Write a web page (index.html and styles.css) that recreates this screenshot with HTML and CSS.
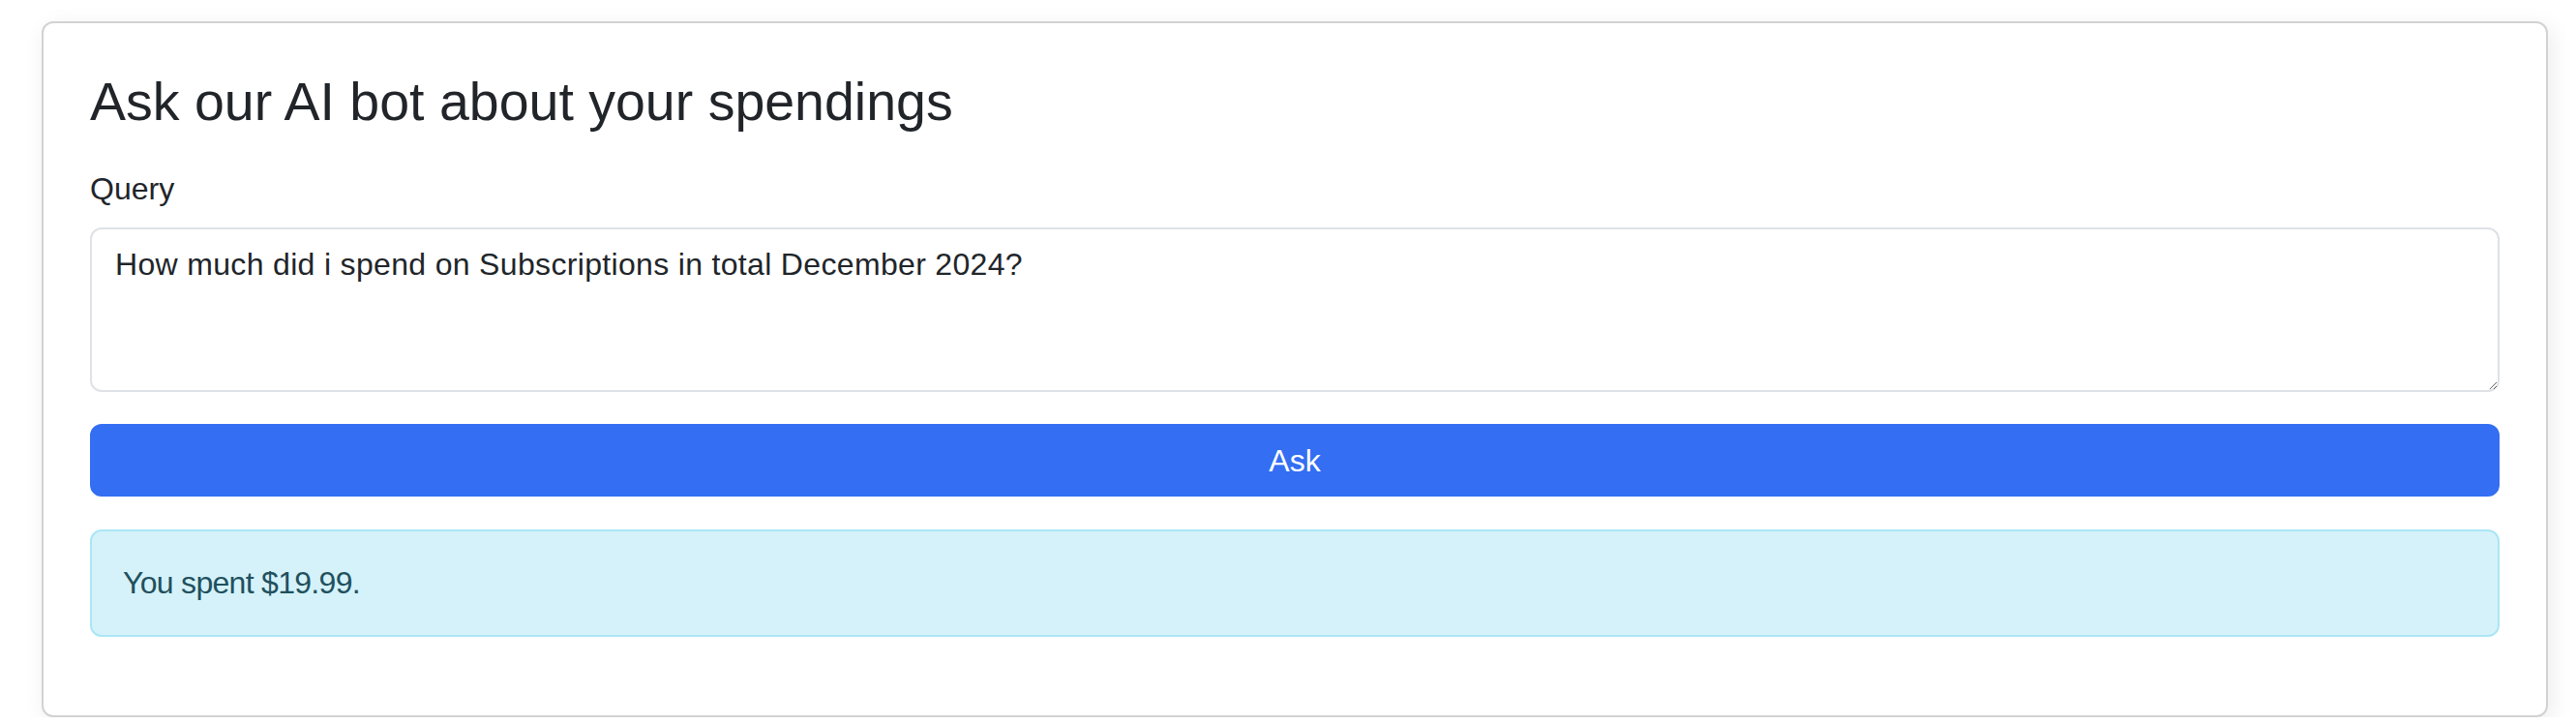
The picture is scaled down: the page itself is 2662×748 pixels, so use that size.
FILE: index.html
```html
<!DOCTYPE html>
<html lang="en">
<head>
<meta charset="utf-8">
<title>Ask our AI bot</title>
<link rel="stylesheet" href="styles.css">
</head>
<body>
<main class="page">
  <section class="card">
    <h3 class="card-title">Ask our AI bot about your spendings</h3>
    <form class="ask-form">
      <label class="form-label" for="query">Query</label>
      <textarea id="query" class="form-control" rows="3">How much did i spend on Subscriptions in total December 2024?</textarea>
      <button type="button" class="btn-primary">Ask</button>
    </form>
    <div class="alert-info">You spent $19.99.</div>
  </section>
</main>
</body>
</html>
```
FILE: styles.css
```css
* { box-sizing: border-box; }
html, body {
  margin: 0;
  padding: 0;
  background: #ffffff;
}
body {
  font-family: "Liberation Sans", Arial, sans-serif;
  color: #212529;
  font-size: 32px;
  line-height: 1.5;
}
.page {
  padding: 22px 29px 0 43px;
}
.card {
  background: #ffffff;
  border: 2px solid #d2d2d2;
  border-radius: 12px;
  padding: 48px;
  box-shadow: 4px 6px 24px rgba(0, 0, 0, 0.08);
  display: flex;
  flex-direction: column;
}
.card-title {
  margin: 0 0 32px 0;
  font-size: 55.5px;
  font-weight: 400;
  line-height: 1.2;
  color: #212529;
}
.ask-form {
  display: flex;
  flex-direction: column;
}
.form-label {
  margin-bottom: 16px;
  font-size: 32px;
  line-height: 48px;
}
.form-control {
  display: block;
  width: 100%;
  height: 170px;
  padding: 12px 24px;
  font-family: "Liberation Sans", Arial, sans-serif;
  font-size: 32px;
  line-height: 48px;
  letter-spacing: 0.33px;
  color: #212529;
  background: #ffffff;
  border: 2px solid #dee2e6;
  border-radius: 12px;
  resize: vertical;
  margin: 0 0 33px 0;
  outline: none;
}
.btn-primary {
  display: block;
  width: 100%;
  height: 75px;
  padding: 12px 24px;
  font-family: "Liberation Sans", Arial, sans-serif;
  font-size: 32px;
  line-height: 48px;
  color: #ffffff;
  background: #336ef3;
  border: 2px solid #336ef3;
  border-radius: 12px;
  margin: 0 0 34px 0;
  cursor: pointer;
}
.alert-info {
  height: 111px;
  padding: 29px 32px;
  font-size: 32px;
  line-height: 49px;
  letter-spacing: -0.7px;
  color: #21505e;
  background: #d5f2fa;
  border: 2px solid #abe6f6;
  border-radius: 12px;
  margin-bottom: 33px;
}
```
